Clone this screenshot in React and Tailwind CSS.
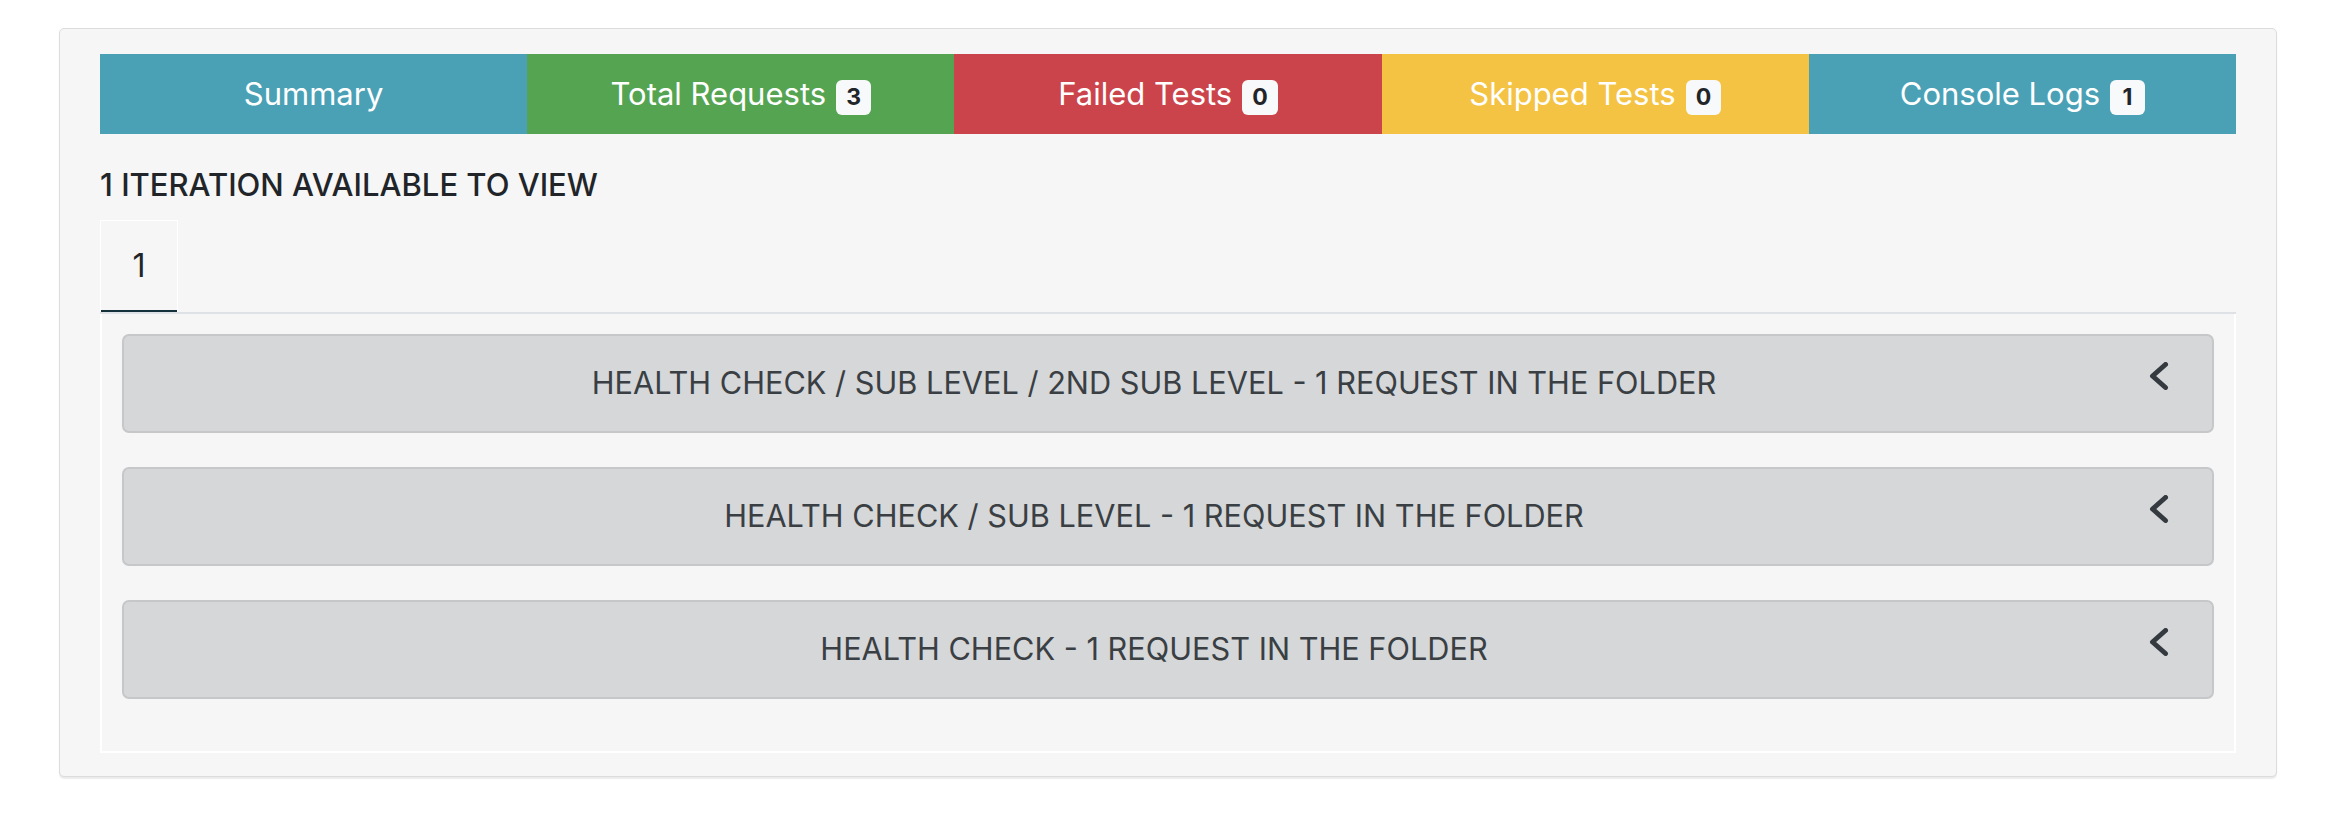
const tabs = [
  { label: "Summary", color: "bg-[#4aa1b6]" },
  { label: "Total Requests", count: 3, color: "bg-[#55a452]" },
  { label: "Failed Tests", count: 0, color: "bg-[#cc444b]" },
  { label: "Skipped Tests", count: 0, color: "bg-[#f4c343]" },
  { label: "Console Logs", count: 1, color: "bg-[#4aa1b6]" },
];

const folders = [
  "Health Check / Sub Level / 2nd Sub Level - 1 request in the folder",
  "Health Check / Sub Level - 1 request in the folder",
  "Health Check - 1 request in the folder",
];

function Chevron() {
  return (
    <svg width="28" height="28" viewBox="0 0 28 28" fill="none">
      <polyline
        points="19.5,2.5 6.5,14 19.5,25.5"
        stroke="#343a40"
        strokeWidth="5"
        strokeLinecap="round"
        strokeLinejoin="round"
      />
    </svg>
  );
}

export default function App() {
  return (
    <div className="w-full h-[840px] bg-white font-['Inter',sans-serif] pt-[28px] pl-[59px]">
      <div className="w-[2218px] h-[749px] bg-[#f6f6f6] border border-[#dcdcdc] rounded-[5px] shadow-[0_2px_1px_rgba(0,0,0,0.08)] pt-[25px] px-[40px]">
        {/* top tab bar */}
        <div className="grid grid-cols-5 h-[80px]">
          {tabs.map((t) => (
            <div key={t.label} className={`${t.color} flex items-center justify-center text-white text-[31px] leading-[38px]`}>
              <span>{t.label}</span>
              {t.count !== undefined && (
                <span className="ml-[10px] mt-[7px] h-[35px] min-w-[35px] px-[10px] rounded-[6px] bg-[#f8f9fa] text-[#212529] text-[23px] font-bold flex items-center justify-center leading-none">
                  {t.count}
                </span>
              )}
            </div>
          ))}
        </div>

        <h2 className="mt-[32px] text-[31px] leading-[38px] font-medium text-[#212529] uppercase">
          1 iteration available to view
        </h2>

        {/* iteration tabs */}
        <div className="mt-[16px] flex border-b-2 border-[#dee2e6]">
          <div className="w-[78px] border border-b-0 border-white">
            <div className="pt-[26px] pb-[25px] text-center text-[32px] leading-[38px] text-[#212529] border-b-2 border-[#14303a]">
              1
            </div>
          </div>
        </div>

        <div className="border-2 border-t-0 border-white p-[20px] pb-[18px]">
          {folders.map((f) => (
            <div
              key={f}
              className="mb-[34px] h-[99px] rounded-[7px] border-2 border-[#c6c7c9] bg-[#d6d7d9] flex items-center px-[38px]"
            >
              <span className="flex-1 text-center uppercase text-[30.7px] text-[#3a3f44]">{f}</span>
              <span className="w-[28px] flex justify-center -translate-y-[8px]">
                <Chevron />
              </span>
            </div>
          ))}
        </div>
      </div>
    </div>
  );
}
